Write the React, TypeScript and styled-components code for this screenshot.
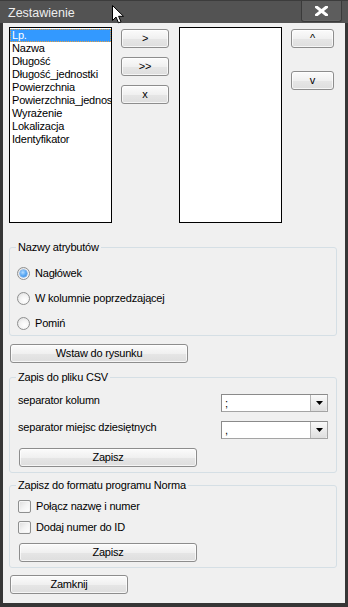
import React from "react";
import styled, { createGlobalStyle } from "styled-components";

const GlobalStyle = createGlobalStyle`
  html, body { margin: 0; padding: 0; background: #2e2e2e; }
  body {
    font-family: "Liberation Sans", Arial, sans-serif;
    font-size: 11px;
    letter-spacing: -0.2px;
    color: #000;
  }
  * { box-sizing: border-box; }
`;

const Window = styled.div`
  position: relative;
  width: 348px;
  height: 607px;
  display: flex;
  flex-direction: column;
  background: #363636;
  overflow: hidden;
`;

const TitleBar = styled.div`
  height: 23px;
  flex: none;
  display: flex;
  align-items: center;
  justify-content: space-between;
  padding: 0 6px 0 8px;
  background: #535353;
  border-top: 1px solid #3c3c3c;
`;

const Title = styled.span`
  font-size: 12.5px;
  letter-spacing: 0;
  color: #eeeeee;
  margin-top: 2px;
`;

const CloseButton = styled.div`
  width: 41px;
  height: 21px;
  margin-top: -1px;
  display: flex;
  align-items: center;
  justify-content: center;
  background: #5d5d5d;
  border: 1px solid #3a3a3a;
  border-top: none;
  border-radius: 0 0 3px 3px;
  box-shadow: inset 0 -1px 0 #666;
`;

const Frame = styled.div`
  flex: 1;
  display: flex;
  padding: 0 3px 4px 3px;
`;

const Client = styled.div`
  flex: 1;
  background: #f0f0f0;
  padding: 4px 8px 0 6px;
  display: flex;
  flex-direction: column;
  align-items: flex-start;
`;

const TopRow = styled.div`
  display: flex;
  align-items: flex-start;
  height: 196px;
  flex: none;
`;

const ListBox = styled.div<{ $mr: number }>`
  width: 103px;
  height: 196px;
  flex: none;
  background: #fff;
  border: 1px solid #000;
  padding-top: 1px;
  overflow: hidden;
  margin-right: ${(p) => p.$mr}px;
`;

const ListItem = styled.div<{ $selected?: boolean }>`
  height: 13px;
  line-height: 13px;
  padding-left: 2px;
  white-space: nowrap;
  background: ${(p) => (p.$selected ? "#3399ff" : "transparent")};
  color: ${(p) => (p.$selected ? "#fff" : "#000")};
  outline: ${(p) => (p.$selected ? "1px dotted #e8a040" : "none")};
  outline-offset: -1px;
`;

const ButtonColumn = styled.div<{ $w: number; $gap: number; $mr: number }>`
  width: ${(p) => p.$w}px;
  flex: none;
  display: flex;
  flex-direction: column;
  gap: ${(p) => p.$gap}px;
  padding-top: 2px;
  margin-right: ${(p) => p.$mr}px;
`;

const Button = styled.div<{ $w?: number; $mt?: number; $ml?: number }>`
  width: ${(p) => (p.$w ? `${p.$w}px` : "100%")};
  height: 19px;
  flex: none;
  margin-top: ${(p) => p.$mt ?? 0}px;
  margin-left: ${(p) => p.$ml ?? 0}px;
  display: flex;
  align-items: center;
  justify-content: center;
  border: 1px solid #8d8d8d;
  border-radius: 3px;
  background: linear-gradient(to bottom, #fbfbfb 0%, #f0f0f0 50%, #e6e6e6 51%, #dedede 100%);
  box-shadow: inset 0 0 0 1px rgba(255, 255, 255, 0.7);
  line-height: 13px;
  white-space: nowrap;
`;

const Group = styled.fieldset<{ $mt: number }>`
  width: 328px;
  flex: none;
  margin: ${(p) => p.$mt}px 0 0 0;
  padding: 0 8px 5px 8px;
  border: 1px solid #d5dfe5;
  border-radius: 3px;
  min-width: 0;
`;

const Legend = styled.legend`
  padding: 0 2px;
  margin-left: -2px;
  line-height: 13px;
  height: 13px;
`;

const GroupBody = styled.div<{ $pt: number; $gap: number; $pl?: number }>`
  display: flex;
  flex-direction: column;
  align-items: flex-start;
  gap: ${(p) => p.$gap}px;
  padding-top: ${(p) => p.$pt}px;
  margin-left: ${(p) => p.$pl ?? 0}px;
`;

const OptionRow = styled.label<{ $h: number }>`
  display: flex;
  align-items: center;
  gap: 5px;
  height: ${(p) => p.$h}px;
  line-height: 13px;
`;

const Radio = styled.span<{ $checked?: boolean }>`
  position: relative;
  width: 13px;
  height: 13px;
  flex: none;
  border-radius: 50%;
  border: 1px solid #8e8f8f;
  background: radial-gradient(circle at 60% 65%, #ffffff 0%, #f4f4f4 45%, #d9d9d9 100%);
  &::after {
    content: "";
    display: ${(p) => (p.$checked ? "block" : "none")};
    position: absolute;
    left: 2px;
    top: 2px;
    width: 7px;
    height: 7px;
    border-radius: 50%;
    background: radial-gradient(circle at 40% 35%, #b8dcff 0%, #62aef5 45%, #2b7fdc 100%);
    box-shadow: 0 0 0 0.5px #3f8ee6;
  }
`;

const Check = styled.span`
  width: 13px;
  height: 13px;
  flex: none;
  border: 1px solid #8e8f8f;
  border-radius: 2px;
  background: linear-gradient(135deg, #dcdcdc 0%, #f3f3f3 50%, #ffffff 100%);
  box-shadow: inset 0 0 0 1px #f5f5f5;
`;

const FieldRow = styled.div`
  width: 310px;
  height: 18px;
  display: flex;
  justify-content: space-between;
  align-items: flex-start;
`;

const FieldLabel = styled.span`
  line-height: 13px;
`;

const Combo = styled.div`
  width: 107px;
  height: 18px;
  display: flex;
  background: #fff;
  border: 1px solid #a4a4a4;
  border-top-color: #8a8a8a;
  border-left-color: #8a8a8a;
`;

const ComboText = styled.span`
  flex: 1;
  padding-left: 3px;
  line-height: 17px;
`;

const DropButton = styled.span`
  width: 17px;
  flex: none;
  display: flex;
  align-items: center;
  justify-content: center;
  border-left: 1px solid #b5b5b5;
  border-radius: 0 2px 2px 0;
  background: linear-gradient(to bottom, #fafafa 0%, #ececec 50%, #dedede 100%);
`;

const Cursor = styled.svg`
  position: absolute;
  left: 112px;
  top: 5px;
  pointer-events: none;
`;

const leftItems = [
  "Lp.",
  "Nazwa",
  "Długość",
  "Długość_jednostki",
  "Powierzchnia",
  "Powierzchnia_jednostki",
  "Wyrażenie",
  "Lokalizacja",
  "Identyfikator",
];

const Arrow = () => (
  <svg width="7" height="4" viewBox="0 0 7 4">
    <path d="M0 0 H7 L3.5 4 Z" fill="#000" />
  </svg>
);

export default function App() {
  return (
    <>
      <GlobalStyle />
      <Window>
        <TitleBar>
          <Title>Zestawienie</Title>
          <CloseButton>
            <svg width="13" height="10" viewBox="0 0 13 10">
              <path d="M1.5 1 L11.5 9 M11.5 1 L1.5 9" stroke="#fff" strokeWidth="3" strokeLinecap="square" />
            </svg>
          </CloseButton>
        </TitleBar>
        <Frame>
          <Client>
            <TopRow>
              <ListBox $mr={9}>
                {leftItems.map((it, i) => (
                  <ListItem key={it} $selected={i === 0}>
                    {it}
                  </ListItem>
                ))}
              </ListBox>
              <ButtonColumn $w={48} $gap={9} $mr={10}>
                <Button>&gt;</Button>
                <Button>&gt;&gt;</Button>
                <Button>x</Button>
              </ButtonColumn>
              <ListBox $mr={9} />
              <ButtonColumn $w={43} $gap={23} $mr={0}>
                <Button>^</Button>
                <Button>v</Button>
              </ButtonColumn>
            </TopRow>

            <Group $mt={18}>
              <Legend>Nazwy atrybutów</Legend>
              <GroupBody $pt={12} $gap={11} $pl={-1}>
                <OptionRow $h={14}>
                  <Radio $checked />
                  Nagłówek
                </OptionRow>
                <OptionRow $h={14}>
                  <Radio />
                  W kolumnie poprzedzającej
                </OptionRow>
                <OptionRow $h={14}>
                  <Radio />
                  Pomiń
                </OptionRow>
              </GroupBody>
            </Group>

            <Button $w={178} $mt={8} $ml={1}>
              Wstaw do rysunku
            </Button>

            <Group $mt={8}>
              <Legend>Zapis do pliku CSV</Legend>
              <GroupBody $pt={10} $gap={9}>
                <FieldRow>
                  <FieldLabel>separator kolumn</FieldLabel>
                  <Combo>
                    <ComboText>;</ComboText>
                    <DropButton>
                      <Arrow />
                    </DropButton>
                  </Combo>
                </FieldRow>
                <FieldRow>
                  <FieldLabel>separator miejsc dziesiętnych</FieldLabel>
                  <Combo>
                    <ComboText>,</ComboText>
                    <DropButton>
                      <Arrow />
                    </DropButton>
                  </Combo>
                </FieldRow>
                <Button $w={178} $ml={1}>
                  Zapisz
                </Button>
              </GroupBody>
            </Group>

            <Group $mt={6}>
              <Legend>Zapisz do formatu programu Norma</Legend>
              <GroupBody $pt={8} $gap={8}>
                <OptionRow $h={13}>
                  <Check />
                  Połącz nazwę i numer
                </OptionRow>
                <OptionRow $h={13}>
                  <Check />
                  Dodaj numer do ID
                </OptionRow>
                <Button $w={178} $mt={1} $ml={1}>
                  Zapisz
                </Button>
              </GroupBody>
            </Group>

            <Button $w={118} $mt={7} $ml={1}>
              Zamknij
            </Button>
          </Client>
        </Frame>
        <Cursor width="13" height="19" viewBox="0 0 13 19">
          <path
            d="M0.5 0.5 L0.5 15.5 L4 12 L6.5 17.8 L9 16.8 L6.6 11.3 L11.5 11.3 Z"
            fill="#fff"
            stroke="#000"
            strokeWidth="1"
            strokeLinejoin="miter"
          />
        </Cursor>
      </Window>
    </>
  );
}
